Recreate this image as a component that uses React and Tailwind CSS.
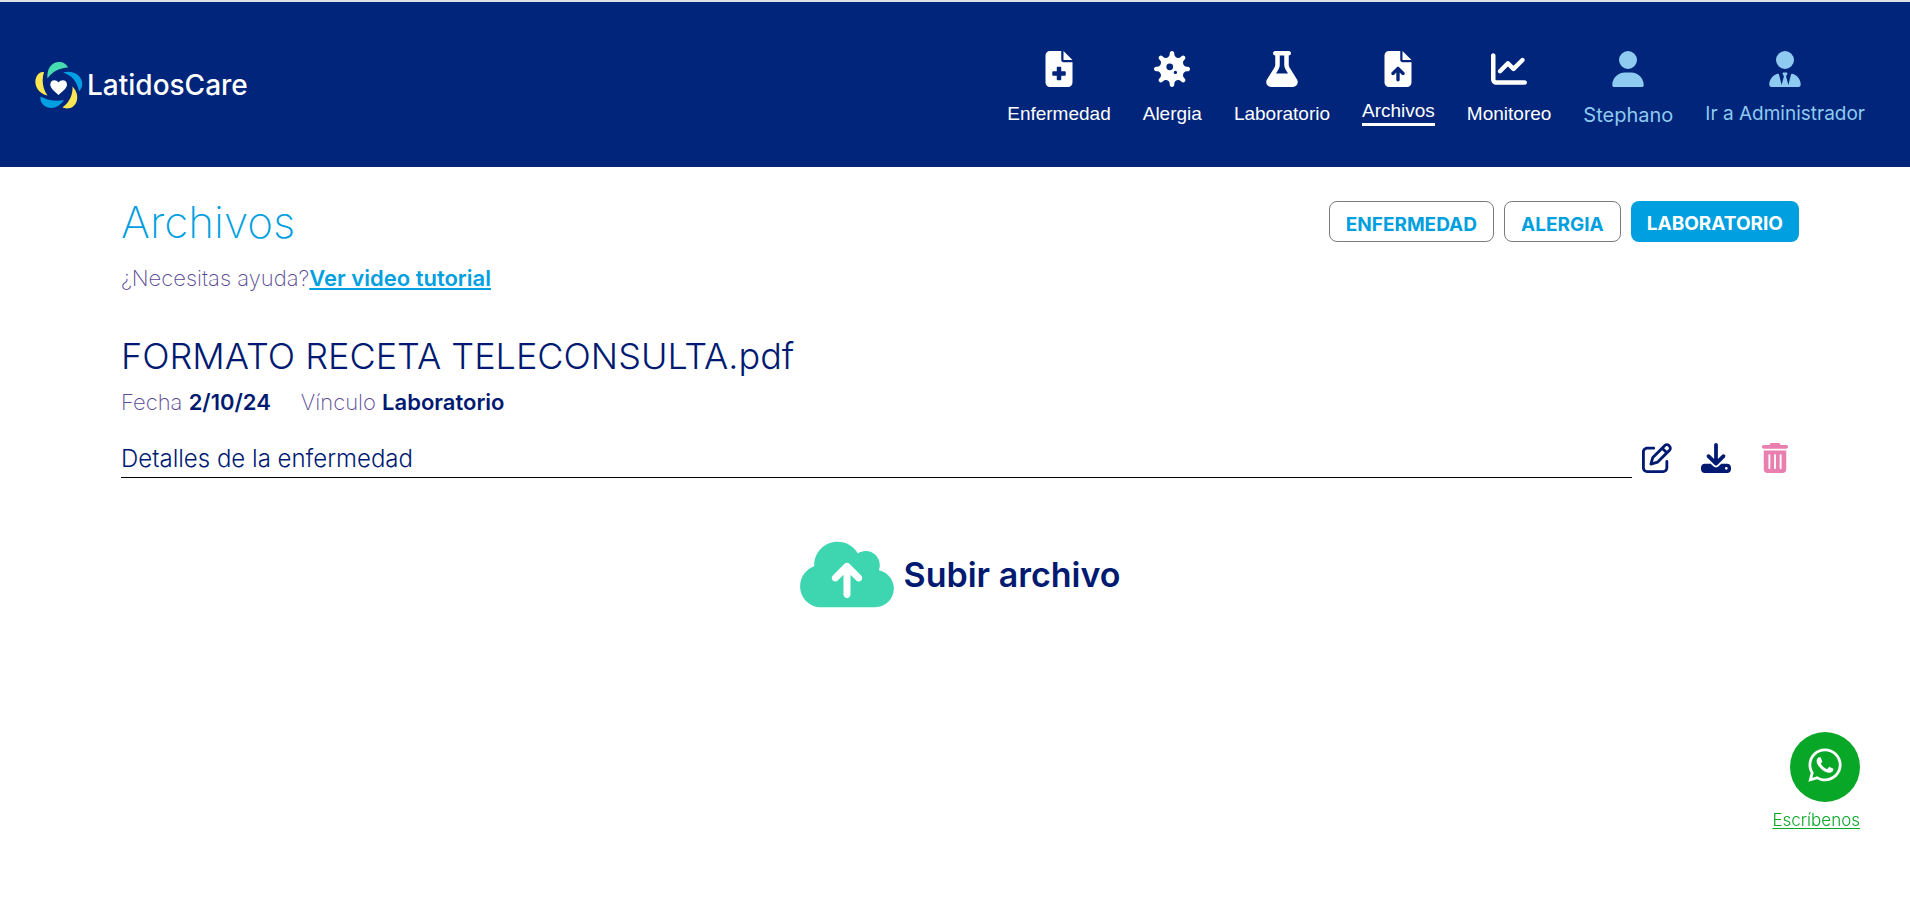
import { FaFileMedical, FaVirus, FaFlask, FaFileArrowUp, FaChartLine, FaUser, FaUserTie, FaRegPenToSquare, FaDownload, FaTrashCan, FaCloudArrowUp, FaWhatsapp } from "react-icons/fa6";

const links = [
  { label: "Enfermedad", Icon: FaFileMedical },
  { label: "Alergia", Icon: FaVirus },
  { label: "Laboratorio", Icon: FaFlask },
  { label: "Archivos", Icon: FaFileArrowUp, active: true },
  { label: "Monitoreo", Icon: FaChartLine },
];

function Logo() {
  return (
    <a href="#inicio" className="flex items-center gap-1 text-white">
      <svg viewBox="5 6 48 48" className="size-12" aria-hidden="true">
        <path d="M17.500 23.500C16.500 14 21.500 7 29 7C33 7 36.500 9 38 12.500C30 13 22 16.500 17.500 23.500Z" fill="#47dcb0" />
        <path d="M33 17.500C43 14.500 52.500 20.500 52.300 29.500C52 32 51 34.500 49 36.300C47.500 27 41.500 20 33 17.500Z" fill="#009ee3" />
        <path d="M42.500 31.500C51 40 47.500 53.500 37 53.500C35 53.500 33.500 53 32.500 52.300C39 48 43 40 42.500 31.500Z" fill="#fee552" />
        <path d="M34 45C28 54.500 15.500 56 11 46.500C10.300 44.500 10.200 43 10.700 41.500C17.500 45.500 26 46.500 34 45Z" fill="#009ee3" />
        <path d="M17.500 40.500C6.500 38.500 2.500 27 7.500 20C9.200 17.500 11.500 16.500 14 17C11.500 25 12.500 33.500 17.500 40.500Z" fill="#fee552" />
        <path d="M28.500 40C25 36.500 20.300 33.500 20.300 29.500C20.300 24.500 26 24 28.500 27.500C31 24 37 24.500 37 29.500C37 33.500 32 36.500 28.500 40Z" fill="#fff" />
      </svg>
      <span className="font-['Inter'] text-[28px] font-medium leading-8">LatidosCare</span>
    </a>
  );
}

export default function App() {
  return (
    <div className="min-h-screen bg-white font-['Inter',sans-serif] text-[#001a72]">
      <header className="flex h-[167px] items-center justify-between border-t-2 border-[#dfe1e5] bg-[#00257a] pr-[45px] pl-[35px]">
        <Logo />
        <nav className="flex items-start gap-8 pt-3 font-['Liberation_Sans',sans-serif] text-[19px] leading-6 text-white">
          {links.map(({ label, Icon, active }) => (
            <a key={label} href={"#" + label.toLowerCase()} className="flex flex-col items-center gap-3">
              <Icon size={36} />
              <span className={active ? "border-b-[3px] border-white leading-6" : "leading-[30px]"}>{label}</span>
            </a>
          ))}
          <a href="#perfil" className="flex flex-col items-center gap-3 font-['Inter'] text-[20px] font-normal leading-8 text-[#8fcaf0]">
            <FaUser size={36} />
            <span>Stephano</span>
          </a>
          <a href="#administrador" className="flex flex-col items-center gap-3 font-['Inter'] text-[19px] font-normal leading-[30px] text-[#8fcaf0]">
            <FaUserTie size={36} />
            <span>Ir a Administrador</span>
          </a>
        </nav>
      </header>

      <main className="pt-[30px] pr-[111px] pl-[121px]">
        <div className="flex items-start justify-between">
          <h1 className="text-[44px] font-extralight leading-[50px] text-[#009fe0]">Archivos</h1>
          <div className="flex gap-2.5 pt-1 text-[19px] font-bold">
            <button className="h-[41px] rounded-lg border border-[#7b7b7b] px-4 pt-2 text-[#009fe0]">ENFERMEDAD</button>
            <button className="h-[41px] rounded-lg border border-[#7b7b7b] px-4 pt-2 text-[#009fe0]">ALERGIA</button>
            <button className="h-[41px] rounded-lg bg-[#009fe0] px-4 pt-[6px] text-white">LABORATORIO</button>
          </div>
        </div>
        <p className="mt-[15px] text-[22px] leading-8">
          <span className="font-extralight text-[#5a4a94]">¿Necesitas ayuda?</span>
          <a href="#tutorial" className="font-semibold text-[#009fe0] underline decoration-2 underline-offset-2">Ver video tutorial</a>
        </p>

        <section className="mt-[34px]">
          <h2 className="text-[36px] font-light leading-[56px]">FORMATO RECETA TELECONSULTA.pdf</h2>
          <p className="mt-[2px] flex gap-[30px] text-[22px] leading-8">
            <span><span className="font-extralight text-[#5a4a94]">Fecha</span> <b className="font-semibold">2/10/24</b></span>
            <span><span className="font-extralight text-[#5a4a94]">Vínculo</span> <b className="font-semibold">Laboratorio</b></span>
          </p>
          <div className="mt-[19px] flex items-center">
            <input aria-label="Detalles" defaultValue="Detalles de la enfermedad" className="h-[41px] min-w-0 flex-1 border-b border-black pt-[2px] text-[24px] font-light outline-none" />
            <div className="flex items-center gap-[29px] pr-[9px] pl-[10px]">
              <button aria-label="Editar"><FaRegPenToSquare size={30} /></button>
              <button aria-label="Descargar"><FaDownload size={30} /></button>
              <button aria-label="Eliminar" className="text-[#e97fae]"><FaTrashCan size={30} /></button>
            </div>
          </div>
        </section>

        <button className="mx-auto mt-[59px] flex items-center gap-[10px] text-[34px] font-semibold">
          <FaCloudArrowUp className="h-[75px] w-[94px] text-[#3dd6b0]" />
          Subir archivo
        </button>
      </main>

      <a href="#whatsapp" className="fixed right-[50px] bottom-[88px] flex flex-col items-end gap-1 text-[17px] font-light leading-7 text-[#09a727] underline underline-offset-2">
        <span className="flex size-[70px] items-center justify-center rounded-full bg-[#09a727] pb-1 text-white">
          <FaWhatsapp size={38} />
        </span>
        Escríbenos
      </a>
    </div>
  );
}
